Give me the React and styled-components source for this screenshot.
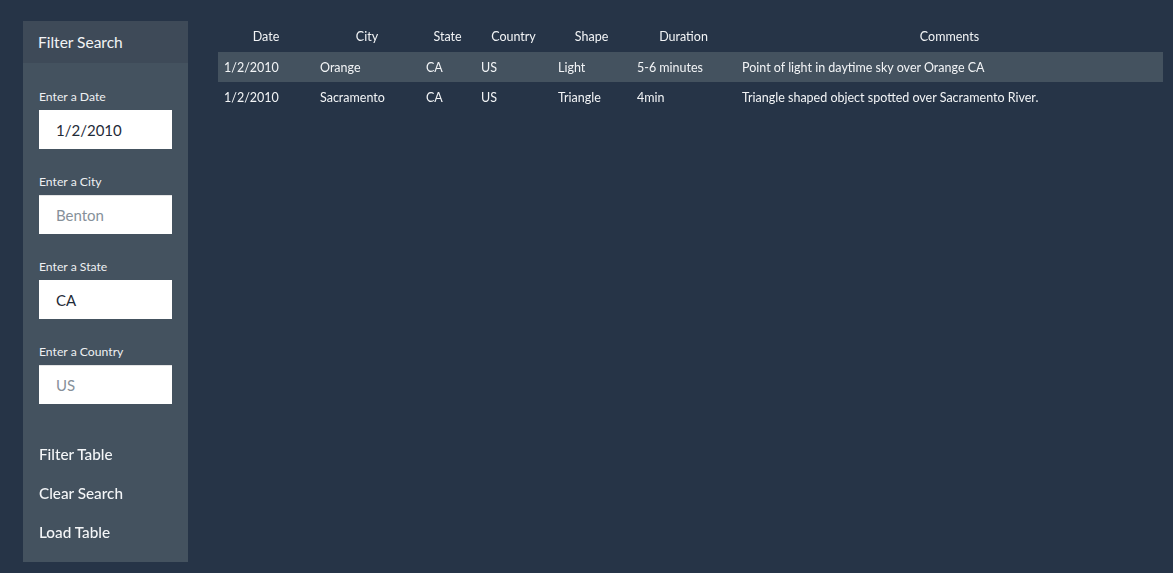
import React from "react";
import styled, { createGlobalStyle } from "styled-components";

const Global = createGlobalStyle`
  html, body { margin: 0; padding: 0; background: #263447; }
  body { font-family: Lato, "Open Sans", sans-serif; color: #fff; }
`;

const Page = styled.div`
  display: flex;
  align-items: flex-start;
  gap: 30px;
  padding: 21px 10px 11px 23px;
  min-height: 573px;
  box-sizing: border-box;
`;

const Sidebar = styled.aside`
  width: 165px;
  height: 541px;
  background: #44525f;
  display: flex;
  flex-direction: column;
  flex-shrink: 0;
`;

const SideHeader = styled.div`
  height: 42px;
  background: #3e4a58;
  display: flex;
  align-items: center;
  padding-left: 15px;
  padding-bottom: 1px;
  box-sizing: border-box;
  font-size: 15.5px;
  color: #f2f4f6;
`;

const Form = styled.div`
  display: flex;
  flex-direction: column;
  padding: 27px 16px 0 16px;
`;

const Field = styled.div`
  display: flex;
  flex-direction: column;
  margin-bottom: 26px;
`;

const Label = styled.label`
  font-size: 12.2px;
  color: #eef0f2;
  height: 20px;
  line-height: 14px;
`;

const Input = styled.input`
  width: 133px;
  height: 39px;
  box-sizing: border-box;
  border: none;
  border-top: 1px solid ${(p) => (p.$empty ? "#e4e4e4" : "#fff")};
  padding: 0 0 0 17px;
  font-family: inherit;
  font-size: 15px;
  color: #1f2b38;
  caret-color: #1f2b38;
  background: #fff;
  outline: none;
  &::placeholder { color: #86909a; }
`;

const Buttons = styled.div`
  display: flex;
  flex-direction: column;
  padding: 13px 16px 0 16px;
  gap: 17px;
`;

const ActionButton = styled.button`
  background: none;
  border: none;
  padding: 0;
  text-align: left;
  font-family: inherit;
  font-size: 15.3px;
  font-weight: 500;
  color: #f4f6f8;
  height: 22px;
  cursor: pointer;
`;

const Table = styled.table`
  width: 945px;
  table-layout: fixed;
  border-collapse: collapse;
  font-size: 12.5px;
  color: #f2f4f6;
`;

const Th = styled.th`
  font-weight: normal;
  height: 31px;
  text-align: center;
  padding: 0;
  vertical-align: middle;
`;

const Row = styled.tr`
  background: ${(p) => (p.$highlight ? "#44525f" : "transparent")};
`;

const Td = styled.td`
  height: 30px;
  padding: 0 0 0 6px;
  vertical-align: middle;
  white-space: nowrap;
`;

const columns = [
  ["Date", 96],
  ["City", 106],
  ["State", 55],
  ["Country", 77],
  ["Shape", 79],
  ["Duration", 105],
  ["Comments", 427],
];

const rows = [
  ["1/2/2010", "Orange", "CA", "US", "Light", "5-6 minutes", "Point of light in daytime sky over Orange CA"],
  ["1/2/2010", "Sacramento", "CA", "US", "Triangle", "4min", "Triangle shaped object spotted over Sacramento River."],
];

export default function App() {
  return (
    <>
      <Global />
      <Page>
        <Sidebar>
          <SideHeader>Filter Search</SideHeader>
          <Form>
            <Field>
              <Label>Enter a Date</Label>
              <Input defaultValue="1/2/2010" />
            </Field>
            <Field>
              <Label>Enter a City</Label>
              <Input $empty placeholder="Benton" />
            </Field>
            <Field>
              <Label>Enter a State</Label>
              <Input defaultValue="CA" autoFocus />
            </Field>
            <Field>
              <Label>Enter a Country</Label>
              <Input $empty placeholder="US" />
            </Field>
          </Form>
          <Buttons>
            <ActionButton>Filter Table</ActionButton>
            <ActionButton>Clear Search</ActionButton>
            <ActionButton>Load Table</ActionButton>
          </Buttons>
        </Sidebar>
        <Table>
          <colgroup>
            {columns.map(([n, w]) => (
              <col key={n} style={{ width: w }} />
            ))}
          </colgroup>
          <thead>
            <tr>
              {columns.map(([n]) => (
                <Th key={n}>{n}</Th>
              ))}
            </tr>
          </thead>
          <tbody>
            {rows.map((r, i) => (
              <Row key={i} $highlight={i === 0}>
                {r.map((c, j) => (
                  <Td key={j}>{c}</Td>
                ))}
              </Row>
            ))}
          </tbody>
        </Table>
      </Page>
    </>
  );
}
